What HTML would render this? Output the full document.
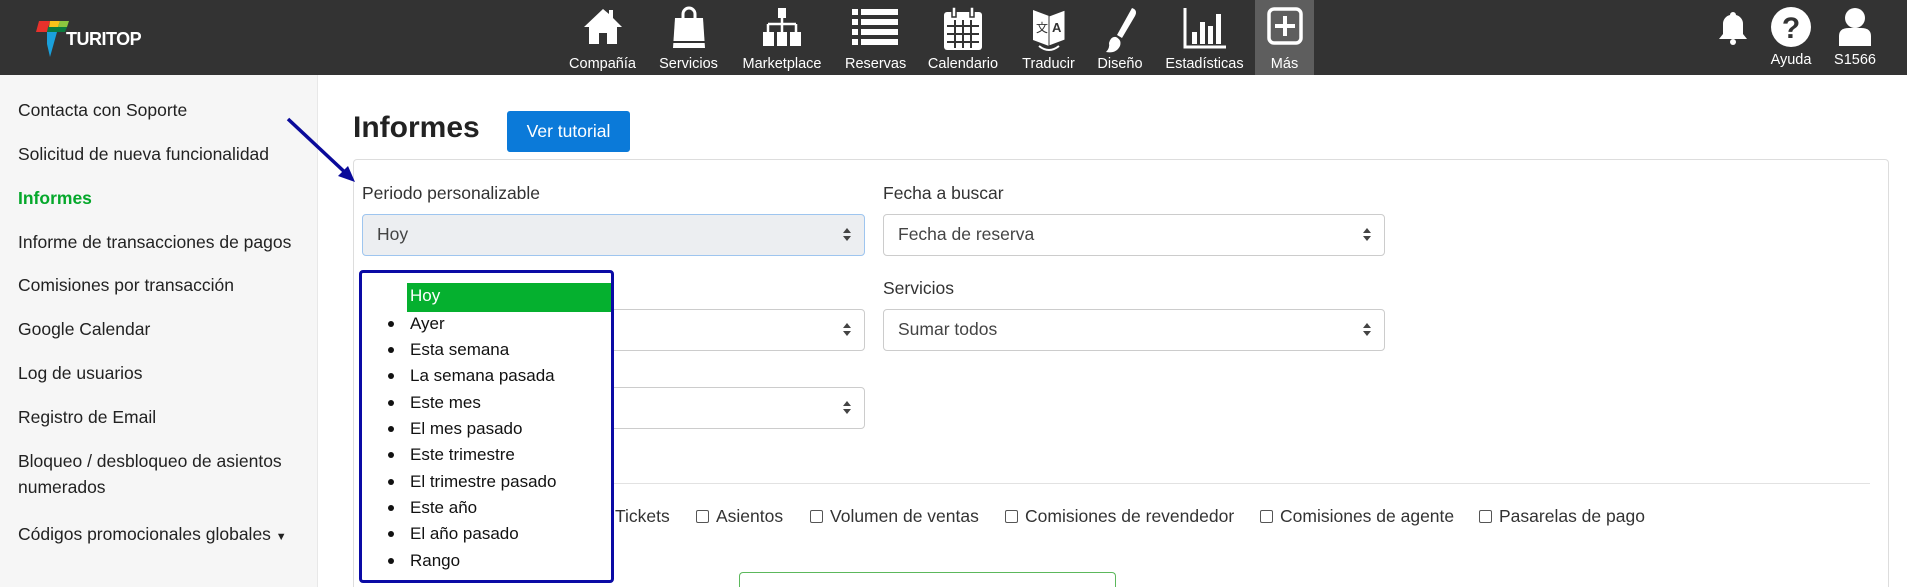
<!DOCTYPE html>
<html><head><meta charset="utf-8"><style>
*{box-sizing:border-box;margin:0;padding:0}
html,body{width:1907px;height:587px;overflow:hidden}
body{font-family:"Liberation Sans",sans-serif;color:#222;background:#fff;position:relative}
.nav{position:absolute;left:0;top:0;width:1907px;height:75px;background:#333}
.ni{position:absolute;top:0;height:75px;text-align:center;color:#fff;font-size:14.5px}
.ni svg{position:absolute;top:6px;left:50%;transform:translateX(-50%)}
.ni span{position:absolute;top:56px;left:0;right:0;white-space:nowrap}
.side{position:absolute;left:0;top:75px;width:318px;height:512px;background:#f6f6f6;border-right:1px solid #e8e8e8}
.side div{position:absolute;left:18px;font-size:17.5px;color:#222;line-height:26px}
.abs{position:absolute}
.lbl{position:absolute;font-size:17.5px;color:#333}
.sel{position:absolute;height:42px;border:1px solid #ccc;border-radius:4px;background:#fff;font-size:17.5px;color:#444;padding:9px 14px}
.sel:after{content:"";position:absolute;right:13px;top:13px;border:4px solid transparent;border-bottom:5px solid #444;border-top:0}
.sel:before{content:"";position:absolute;right:13px;top:21px;border:4px solid transparent;border-top:5px solid #444;border-bottom:0}
.cb{position:absolute;top:506px;font-size:17.5px;color:#333;white-space:nowrap}
.cb i{display:inline-block;width:13px;height:13px;border:1px solid #555;border-radius:2px;margin-right:7px;vertical-align:-1px}
.dd li{position:absolute;left:48px;font-size:17px;list-style:none;color:#111}
.dd li:before{content:"";position:absolute;left:-22px;top:7px;width:6px;height:6px;border-radius:50%;background:#111}
.dd li.hoy:before{display:none}
</style></head><body>
<div class="nav">
 <svg class="abs" style="left:36px;top:19px" width="34" height="40" viewBox="0 0 34 40"><polygon points="3,2 14,2 11,13 0,13" fill="#e8312b"/><polygon points="14,2 24,2 22,8 13,8" fill="#f8c21a"/><polygon points="24,2 33,2 31,8 22,8" fill="#8cc63f"/><polygon points="12,8 31,8 29,13 11,13" fill="#0b7a3e"/><polygon points="11,13 21,13 14,38 11,25" fill="#1aa0db"/></svg>
 <div class="abs" style="left:66px;top:29px;color:#fff;font-weight:bold;font-size:18px;letter-spacing:-0.5px">TURITOP</div>
 <div class="ni" style="left:568px;width:69px"><svg width="42" height="40" viewBox="0 0 42 40"><path d="M21 3 L2 21 L7 21 L7 38 L17 38 L17 27 L25 27 L25 38 L35 38 L35 21 L40 21 L31 12 L31 4 L27 4 L27 8 Z" fill="#fff"/></svg><span>Compañía</span></div>
 <div class="ni" style="left:658px;width:61px"><svg width="36" height="44" viewBox="0 0 36 44"><path d="M12 14 V8 a6 6 0 0 1 12 0 V14" stroke="#fff" stroke-width="3" fill="none"/><path d="M4 12 H32 L34 42 H2 Z" fill="#fff"/><rect x="2" y="35" width="32" height="2" fill="#333"/></svg><span>Servicios</span></div>
 <div class="ni" style="left:741px;width:82px"><svg width="40" height="42" viewBox="0 0 40 42"><rect x="16" y="2" width="8" height="10" fill="#fff"/><path d="M20 12V18M6 18H34M6 18V26M20 18V26M34 18V26" stroke="#fff" stroke-width="2.5" fill="none"/><rect x="1" y="26" width="11" height="14" fill="#fff"/><rect x="15" y="26" width="10" height="14" fill="#fff"/><rect x="28" y="26" width="11" height="14" fill="#fff"/></svg><span>Marketplace</span></div>
 <div class="ni" style="left:845px;width:60px"><svg width="46" height="40" viewBox="0 0 46 40"><g fill="#fff"><rect x="0" y="3" width="6" height="6"/><rect x="9" y="3" width="37" height="6"/><rect x="0" y="13" width="6" height="6"/><rect x="9" y="13" width="37" height="6"/><rect x="0" y="23" width="6" height="6"/><rect x="9" y="23" width="37" height="6"/><rect x="0" y="33" width="6" height="6"/><rect x="9" y="33" width="37" height="6"/></g></svg><span>Reservas</span></div>
 <div class="ni" style="left:926px;width:74px"><svg width="42" height="46" viewBox="0 0 42 46"><rect x="2" y="6" width="38" height="38" rx="3" fill="#fff"/><rect x="10" y="1" width="4" height="10" fill="#fff" stroke="#333" stroke-width="1.5"/><rect x="28" y="1" width="4" height="10" fill="#fff" stroke="#333" stroke-width="1.5"/><path d="M5 20H37M5 28H37M5 36H37M13 14V42M21 14V42M29 14V42" stroke="#333" stroke-width="2"/></svg><span>Calendario</span></div>
 <div class="ni" style="left:1022px;width:53px"><svg width="40" height="46" viewBox="0 0 40 46"><path d="M4 4 L20 10 V40 L4 34 Z" fill="#fff"/><path d="M20 10 L36 4 V34 L20 40 Z" fill="#fff" stroke="#333"/><text x="7" y="26" font-size="12" fill="#333" font-family="Noto Sans CJK JP">文</text><text x="23" y="26" font-size="13" fill="#333" font-weight="bold">A</text><path d="M10 40 Q20 48 30 40" stroke="#fff" stroke-width="2" fill="none"/></svg><span>Traducir</span></div>
 <div class="ni" style="left:1096px;width:48px"><svg width="36" height="48" viewBox="0 0 36 48"><path d="M30 2 Q36 4 33 10 L20 32 L15 29 Z" fill="#fff"/><path d="M14 31 Q20 34 18 40 Q14 48 4 46 Q8 42 7 37 Q9 30 14 31Z" fill="#fff"/></svg><span>Diseño</span></div>
 <div class="ni" style="left:1165px;width:79px"><svg width="46" height="44" viewBox="0 0 46 44"><path d="M3 2V41H44" stroke="#fff" stroke-width="3" fill="none"/><g fill="#fff"><rect x="10" y="26" width="5" height="12"/><rect x="18" y="16" width="5" height="22"/><rect x="26" y="20" width="5" height="18"/><rect x="34" y="8" width="5" height="30"/></g></svg><span>Estadísticas</span></div>
 <div class="ni" style="left:1255px;width:59px;background:#5e5e5e"><svg width="38" height="40" viewBox="0 0 38 40"><rect x="3" y="3" width="32" height="34" rx="5" stroke="#fff" stroke-width="3.5" fill="none"/><path d="M19 10V30M9 20H29" stroke="#fff" stroke-width="4"/></svg><span>Más</span></div>
 <svg class="abs" style="left:1718px;top:12px" width="30" height="34" viewBox="0 0 30 34"><path d="M15 0a3 3 0 0 1 3 3 a9 9 0 0 1 7 9v10l4 5H1l4-5V12a9 9 0 0 1 7-9 a3 3 0 0 1 3-3Z" fill="#fff"/><circle cx="15" cy="30" r="3" fill="#fff"/></svg>
 <div class="ni" style="left:1766px;width:50px"><svg width="42" height="42" viewBox="0 0 42 42" style="top:6px"><circle cx="21" cy="21" r="20" fill="#fff"/><text x="21" y="32" text-anchor="middle" font-size="30" font-weight="bold" fill="#333">?</text></svg><span style="top:52px">Ayuda</span></div>
 <div class="ni" style="left:1830px;width:50px"><svg width="36" height="42" viewBox="0 0 36 42" style="top:6px"><circle cx="18" cy="12" r="10" fill="#fff"/><path d="M2 40 V30 Q2 22 12 22 H24 Q34 22 34 30 V40Z" fill="#fff"/></svg><span style="top:52px">S1566</span></div>
</div>
<div class="side">
 <div style="top:22px">Contacta con Soporte</div>
 <div style="top:66px">Solicitud de nueva funcionalidad</div>
 <div style="top:110px;color:#05a82b;font-weight:bold">Informes</div>
 <div style="top:154px">Informe de transacciones de pagos</div>
 <div style="top:197px">Comisiones por transacción</div>
 <div style="top:241px">Google Calendar</div>
 <div style="top:285px">Log de usuarios</div>
 <div style="top:329px">Registro de Email</div>
 <div style="top:373px">Bloqueo / desbloqueo de asientos<br>numerados</div>
 <div style="top:446px">Códigos promocionales globales <span style="font-size:11px">▼</span></div>
</div>
<div class="abs" style="left:353px;top:111px;font-size:30px;font-weight:bold;color:#222">Informes</div>
<div class="abs" style="left:507px;top:111px;width:123px;height:41px;background:#0b7ad9;border-radius:3px;color:#fff;font-size:17.5px;text-align:center;line-height:41px">Ver tutorial</div>
<div class="abs" style="left:353px;top:159px;width:1536px;height:428px;border:1px solid #ddd;border-bottom:0;border-radius:4px 4px 0 0"></div>
<div class="lbl" style="left:362px;top:183px">Periodo personalizable</div>
<div class="sel" style="left:362px;top:214px;width:503px;background:#eceef1;border-color:#9ec5ef">Hoy</div>
<div class="lbl" style="left:883px;top:183px">Fecha a buscar</div>
<div class="sel" style="left:883px;top:214px;width:502px">Fecha de reserva</div>
<div class="lbl" style="left:883px;top:278px">Servicios</div>
<div class="sel" style="left:362px;top:309px;width:503px"></div>
<div class="sel" style="left:883px;top:309px;width:502px">Sumar todos</div>
<div class="sel" style="left:362px;top:387px;width:503px"></div>
<div class="abs" style="left:362px;top:483px;width:1508px;height:1px;background:#e2e2e2"></div>
<div class="cb" style="left:615px">Tickets</div>
<div class="cb" style="left:696px"><i></i>Asientos</div>
<div class="cb" style="left:810px"><i></i>Volumen de ventas</div>
<div class="cb" style="left:1005px"><i></i>Comisiones de revendedor</div>
<div class="cb" style="left:1260px"><i></i>Comisiones de agente</div>
<div class="cb" style="left:1479px"><i></i>Pasarelas de pago</div>
<div class="abs" style="left:739px;top:572px;width:377px;height:15px;border:1.5px solid #5cb85c;border-bottom:0;border-radius:4px 4px 0 0"></div>
<div class="abs dd" style="left:359px;top:270px;width:255px;height:313px;background:#fff;border:3.5px solid #0a0aa5;border-radius:4px">
 <div class="abs" style="left:45px;top:10px;width:204px;height:29px;background:#05b02f"></div>
 <ul>
 <li style="top:13px;color:#fff" class="hoy">Hoy</li>
 <li style="top:41px">Ayer</li>
 <li style="top:67px">Esta semana</li>
 <li style="top:93px">La semana pasada</li>
 <li style="top:120px">Este mes</li>
 <li style="top:146px">El mes pasado</li>
 <li style="top:172px">Este trimestre</li>
 <li style="top:199px">El trimestre pasado</li>
 <li style="top:225px">Este año</li>
 <li style="top:251px">El año pasado</li>
 <li style="top:278px">Rango</li>
 </ul>
</div>
<svg class="abs" style="left:280px;top:110px" width="90" height="80" viewBox="0 0 90 80"><path d="M8 9 L70 67" stroke="#0a0a9a" stroke-width="3.5"/><polygon points="75,72 58,66 68,56" fill="#0a0a9a"/></svg>
</body></html>
